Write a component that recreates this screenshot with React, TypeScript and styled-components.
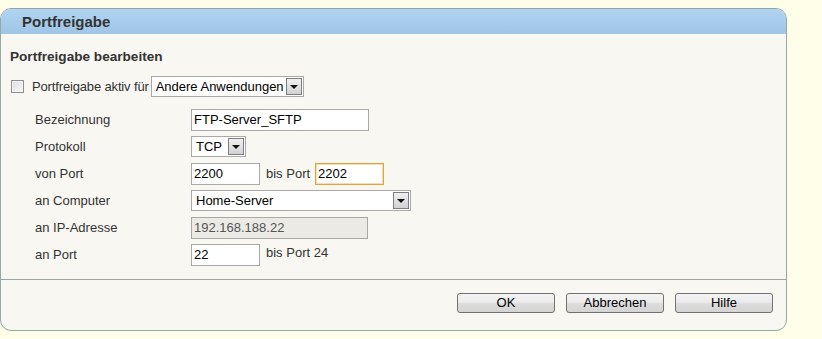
import React from "react";
import styled, { createGlobalStyle } from "styled-components";

const Global = createGlobalStyle`
  html, body { margin: 0; padding: 0; background: #fffee8; }
  body { font-family: "Liberation Sans", Arial, sans-serif; font-size: 13px; color: #333; }
  * { box-sizing: border-box; }
`;

const Page = styled.div`
  padding-top: 8px;
  width: 822px;
  height: 339px;
`;

const Panel = styled.div`
  width: 787px;
  height: 323px;
  border: 1px solid #93a9a6;
  border-radius: 11px;
  background: #f8f7f2;
  overflow: hidden;
  display: flex;
  flex-direction: column;
`;

const Header = styled.div`
  height: 25px;
  flex: none;
  background: linear-gradient(#b0d4f2, #a0c5e5);
  padding-left: 21px;
  display: flex;
  align-items: center;
  font-size: 15px;
  font-weight: bold;
  color: #333;
`;

const Body = styled.div`
  flex: 1;
  padding-top: 15px;
  display: flex;
  flex-direction: column;
`;

const Content = styled.div`
  padding-left: 9px;
`;

const Title = styled.div`
  font-size: 13.6px;
  font-weight: bold;
  line-height: 16px;
  color: #333;
`;

const CheckRow = styled.div`
  display: flex;
  align-items: center;
  height: 21px;
  margin-top: 11px;
`;

const CheckBox = styled.span`
  width: 13px;
  height: 13px;
  margin-left: 1px;
  border: 1px solid #8f8f8f;
  background: linear-gradient(135deg, #dcdcdc, #fafafa);
  box-shadow: inset 0 0 0 1px #f4f4f4;
`;

const CheckLabel = styled.span`
  margin-left: 8px;
  margin-right: 2px;
  letter-spacing: -0.15px;
`;

const Form = styled.div`
  display: grid;
  grid-template-columns: 156px auto;
  grid-auto-rows: 27px;
  margin-top: 9px;
  padding-left: 25px;
  align-items: center;
`;

const Label = styled.div`
  color: #333;
`;

const Cell = styled.div`
  display: flex;
  align-items: center;
`;

const Input = styled.div<{ $w: number; $focus?: boolean; $disabled?: boolean }>`
  width: ${(p) => p.$w}px;
  height: 22px;
  border: 1px solid ${(p) => (p.$focus ? "#e2a33f" : "#a9a9a9")};
  box-shadow: ${(p) => (p.$focus ? "inset 0 0 0 1px #f6dcae" : "none")};
  background: ${(p) => (p.$disabled ? "#ebeae4" : "#fff")};
  color: ${(p) => (p.$disabled ? "#555" : "#000")};
  padding-left: 2px;
  display: flex;
  align-items: center;
  font-size: 13px;
`;

const Select = styled.div<{ $w: number }>`
  width: ${(p) => p.$w}px;
  height: 21px;
  border: 1px solid #a9a9a9;
  background: #fff;
  color: #000;
  display: flex;
  align-items: center;
  justify-content: space-between;
  padding: 0 1px 0 4px;
  font-size: 13px;
`;

const Arrow = styled.span`
  width: 16px;
  height: 17px;
  border: 1px solid #7d7d7d;
  background: linear-gradient(#f0f0f0, #d2d2d2);
  display: flex;
  align-items: center;
  justify-content: center;
  &::after {
    content: "";
    border-left: 4px solid transparent;
    border-right: 4px solid transparent;
    border-top: 4px solid #111;
    margin-top: 1px;
  }
`;

const Between = styled.span<{ $raised?: boolean }>`
  margin: ${(p) => (p.$raised ? "-4px" : "0")} 5px 0 6px;
  color: #333;
`;

const Separator = styled.div`
  margin-top: 11px;
  height: 1px;
  background: #93a9a6;
`;

const Footer = styled.div`
  flex: 1;
  display: flex;
  justify-content: flex-end;
  gap: 11px;
  padding: 13px 13px 0 0;
`;

const Button = styled.button`
  width: 98px;
  height: 20px;
  border: 1px solid #717171;
  border-radius: 3px;
  background: linear-gradient(#f4f4f4 0%, #ebebeb 45%, #dcdcdc 55%, #d4d4d4 100%);
  font-family: "Liberation Sans", Arial, sans-serif;
  font-size: 13px;
  color: #000;
  padding: 0;
  line-height: 18px;
`;

export default function App() {
  return (
    <Page>
      <Global />
      <Panel>
        <Header>Portfreigabe</Header>
        <Body>
          <Content>
            <Title>Portfreigabe bearbeiten</Title>
            <CheckRow>
              <CheckBox />
              <CheckLabel>Portfreigabe aktiv für</CheckLabel>
              <Select $w={153}>
                Andere Anwendungen
                <Arrow />
              </Select>
            </CheckRow>
            <Form>
              <Label>Bezeichnung</Label>
              <Cell>
                <Input $w={178}>FTP-Server_SFTP</Input>
              </Cell>
              <Label>Protokoll</Label>
              <Cell>
                <Select $w={55}>
                  TCP
                  <Arrow />
                </Select>
              </Cell>
              <Label>von Port</Label>
              <Cell>
                <Input $w={69}>2200</Input>
                <Between>bis Port</Between>
                <Input $w={69} $focus>2202</Input>
              </Cell>
              <Label>an Computer</Label>
              <Cell>
                <Select $w={220}>
                  Home-Server
                  <Arrow />
                </Select>
              </Cell>
              <Label>an IP-Adresse</Label>
              <Cell>
                <Input $w={177} $disabled>192.168.188.22</Input>
              </Cell>
              <Label>an Port</Label>
              <Cell>
                <Input $w={69}>22</Input>
                <Between $raised>bis Port 24</Between>
              </Cell>
            </Form>
          </Content>
          <Separator />
          <Footer>
            <Button>OK</Button>
            <Button>Abbrechen</Button>
            <Button>Hilfe</Button>
          </Footer>
        </Body>
      </Panel>
    </Page>
  );
}
